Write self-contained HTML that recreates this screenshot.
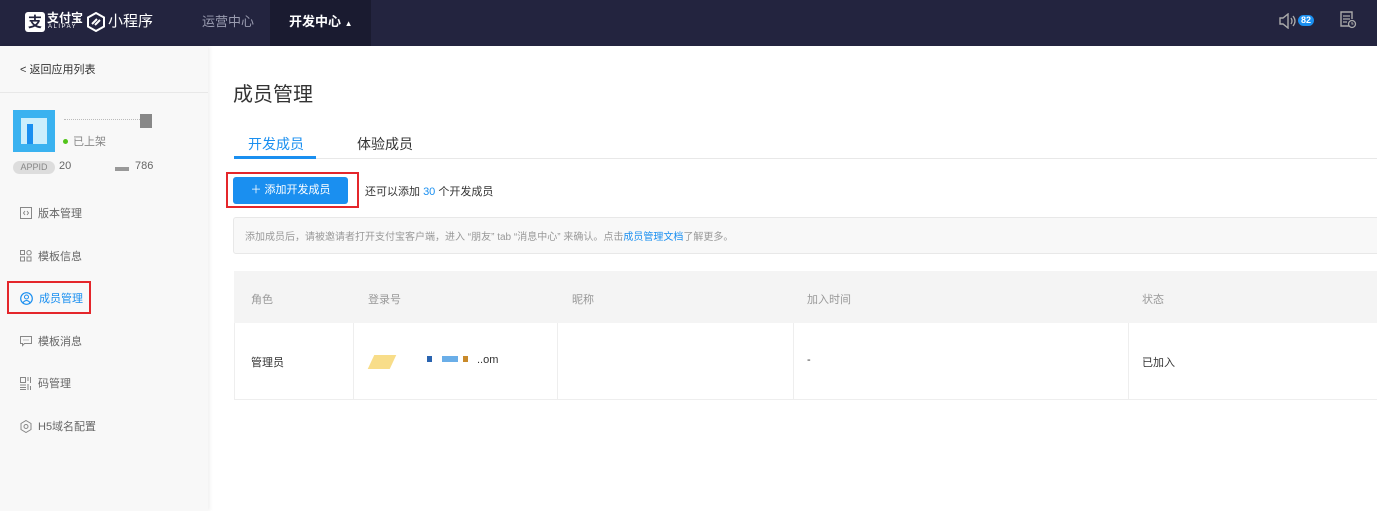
<!DOCTYPE html>
<html><head><meta charset="utf-8">
<style>
*{margin:0;padding:0;box-sizing:border-box}
body{width:1377px;height:511px;overflow:hidden;font-family:"Liberation Sans","Noto Sans CJK SC",sans-serif;background:#fff;position:relative;font-size:12px;color:#333}
.hdr{position:absolute;left:0;top:0;width:1377px;height:46px;background:#23243f}
.hdr .t{position:absolute;top:11px;font-size:13px;color:#9a9cb0}
.act{position:absolute;left:270px;top:0;width:101px;height:46px;background:#1a1b30}
.side{position:absolute;left:0;top:46px;width:208px;height:465px;background:#f8f8f8;box-shadow:2px 0 4px rgba(0,0,0,.06)}
.side .it{position:absolute;left:20px;font-size:11px;color:#666;display:flex;align-items:center}
.side .it svg{margin-right:6px}
.abs{position:absolute}
.tbl{position:absolute;left:234px;top:271px;width:1143px;height:129px;border-bottom:1px solid #eee}
.th{position:absolute;top:0;height:52px;width:100%;background:#f4f4f4}
.cell{position:absolute;font-size:11px}
.vl{position:absolute;top:52px;width:1px;height:77px;background:#eee}
</style></head><body>
<div class="hdr">
 <div class="abs" style="left:25px;top:12px;width:20px;height:20px;background:#fff;border-radius:3px;color:#23243f;font-size:14px;font-weight:bold;text-align:center;line-height:20px">支</div>
 <div class="abs" style="left:47px;top:9px;color:#fff;font-size:12px;font-weight:bold">支付宝</div>
 <div class="abs" style="left:48px;top:24px;color:#fff;font-size:6px;letter-spacing:1.5px">ALIPAY</div>
 <svg class="abs" style="left:87px;top:12px" width="18" height="20" viewBox="0 0 18 20"><path d="M9 1 L17 5.5 L17 14.5 L9 19 L1 14.5 L1 5.5 Z" fill="none" stroke="#fff" stroke-width="2"/><path d="M5 12 L10 7 M8 13 L13 8" stroke="#fff" stroke-width="2"/></svg>
 <div class="abs" style="left:108px;top:10px;color:#fff;font-size:15px">小程序</div>
 <div class="t" style="left:202px">运营中心</div>
 <div class="act"></div>
 <div class="t" style="left:289px;color:#fff;font-weight:bold">开发中心 <span style="font-size:8px">▲</span></div>
 <svg class="abs" style="left:1279px;top:13px" width="18" height="16" viewBox="0 0 18 16"><path d="M1 5h3l5-4v14l-5-4H1z" fill="none" stroke="#aaa" stroke-width="1.4"/><path d="M12 5q2 3 0 6M14 3q4 5 0 10" fill="none" stroke="#aaa" stroke-width="1.3"/></svg>
 <div class="abs" style="left:1298px;top:15px;width:16px;height:11px;border-radius:6px;background:#1a8ff0;color:#fff;font-size:9px;font-weight:bold;text-align:center;line-height:11px">82</div>
 <svg class="abs" style="left:1339px;top:11px" width="18" height="18" viewBox="0 0 18 18"><path d="M10 15H2V1h11v7" fill="none" stroke="#aaa" stroke-width="1.4"/><path d="M4 5h7M4 8h7M4 11h4" stroke="#aaa" stroke-width="1.3"/><circle cx="13" cy="13" r="3.5" fill="none" stroke="#aaa" stroke-width="1.3"/><path d="M13 11v2h1.5" stroke="#aaa" stroke-width="1"/></svg>
</div>

<div class="side">
 <div class="abs" style="left:20px;top:15px;font-size:11px;color:#333">&lt; 返回应用列表</div>
 <div class="abs" style="left:0;top:46px;width:208px;height:1px;background:#e8e8e8"></div>
 <div class="abs" style="left:13px;top:64px;width:42px;height:42px;background:#3ab2f0"><div style="position:absolute;left:8px;top:8px;width:26px;height:26px;background:#cbeefc"></div><div style="position:absolute;left:14px;top:14px;width:6px;height:20px;background:#1a8ff0"></div></div>
 <div class="abs" style="left:64px;top:73px;width:80px;height:2px;border-top:1px dotted #bbb"></div>
 <div class="abs" style="left:140px;top:68px;width:12px;height:14px;background:#888"></div>
 <div class="abs" style="left:63px;top:93px;width:5px;height:5px;border-radius:50%;background:#52c41a"></div>
 <div class="abs" style="left:73px;top:87px;font-size:11px;color:#888">已上架</div>
 <div class="abs" style="left:13px;top:115px;width:42px;height:13px;border-radius:7px;background:#ddd;color:#888;font-size:9px;text-align:center;line-height:13px">APPID</div>
 <div class="abs" style="left:59px;top:114px;font-size:11px;color:#666">20</div>
 <div class="abs" style="left:115px;top:121px;width:14px;height:4px;background:#999"></div>
 <div class="abs" style="left:135px;top:114px;font-size:11px;color:#666">786</div>
 <div class="it" style="top:159px"><svg width="12" height="12"><rect x=".5" y=".5" width="11" height="11" fill="none" stroke="#888"/><path d="M5 4L3.5 6 5 8M7 4l1.5 2L7 8" fill="none" stroke="#888"/></svg>版本管理</div>
 <div class="it" style="top:202px"><svg width="12" height="12"><rect x=".5" y=".5" width="4" height="4" fill="none" stroke="#888"/><rect x=".5" y="7" width="4" height="4" fill="none" stroke="#888"/><rect x="7" y="7" width="4" height="4" fill="none" stroke="#888"/><circle cx="9" cy="2.7" r="2.2" fill="none" stroke="#888"/></svg>模板信息</div>
 <div class="abs" style="left:7px;top:235px;width:84px;height:33px;border:2px solid #e4262b"></div>
 <div class="it" style="top:244px;color:#1a8ff0"><svg width="13" height="13"><circle cx="6.5" cy="6.5" r="5.8" fill="none" stroke="#1a8ff0" stroke-width="1.2"/><circle cx="6.5" cy="5" r="2" fill="none" stroke="#1a8ff0"/><path d="M3 10.5q3.5-4 7 0" fill="none" stroke="#1a8ff0"/></svg>成员管理</div>
 <div class="it" style="top:287px"><svg width="12" height="12"><path d="M.5 1.5h11v7h-7l-2 2v-2h-2z" fill="none" stroke="#888"/><path d="M3.5 5h1M5.5 5h1M7.5 5h1" stroke="#888"/></svg>模板消息</div>
 <div class="it" style="top:329px"><svg width="12" height="13"><rect x=".5" y=".5" width="5" height="5" fill="none" stroke="#888"/><path d="M0 8h6M0 10.5h6M0 12.5h6M8 0v4M10.5 0v6M8 7v6M10.5 9v4" stroke="#888"/></svg>码管理</div>
 <div class="it" style="top:372px"><svg width="12" height="13"><path d="M6 .5l5 3v6l-5 3-5-3v-6z" fill="none" stroke="#888"/><circle cx="6" cy="6.5" r="2" fill="none" stroke="#888"/></svg>H5域名配置</div>
</div>

<div class="abs" style="left:233px;top:78px;font-size:20px;color:#333">成员管理</div>
<div class="abs" style="left:234px;top:158px;width:1143px;height:1px;background:#e8e8e8"></div>
<div class="abs" style="left:248px;top:134px;font-size:14px;color:#1a8ff0">开发成员</div>
<div class="abs" style="left:234px;top:156px;width:82px;height:3px;background:#1a8ff0"></div>
<div class="abs" style="left:357px;top:134px;font-size:14px;color:#333">体验成员</div>

<div class="abs" style="left:226px;top:172px;width:133px;height:36px;border:2px solid #e4262b"></div>
<div class="abs" style="left:233px;top:177px;width:115px;height:27px;background:#1a8ff0;border-radius:3px;color:#fff;font-size:11px;text-align:center;line-height:27px">＋ 添加开发成员</div>
<div class="abs" style="left:365px;top:183px;font-size:11px;color:#333">还可以添加 <span style="color:#1a8ff0">30</span> 个开发成员</div>

<div class="abs" style="left:233px;top:217px;width:1150px;height:37px;background:#f8f8f8;border:1px solid #e8e8e8;border-radius:3px"></div>
<div class="abs" style="left:245px;top:228px;font-size:10px;color:#999">添加成员后，请被邀请者打开支付宝客户端，进入 “朋友” tab “消息中心” 来确认。点击<span style="color:#1a8ff0">成员管理文档</span>了解更多。</div>

<div class="tbl">
 <div class="th"></div>
 <div class="cell" style="left:17px;top:20px;color:#999">角色</div>
 <div class="cell" style="left:134px;top:20px;color:#999">登录号</div>
 <div class="cell" style="left:338px;top:20px;color:#999">昵称</div>
 <div class="cell" style="left:573px;top:20px;color:#999">加入时间</div>
 <div class="cell" style="left:908px;top:20px;color:#999">状态</div>
 <div class="vl" style="left:0"></div>
 <div class="vl" style="left:119px"></div>
 <div class="vl" style="left:323px"></div>
 <div class="vl" style="left:559px"></div>
 <div class="vl" style="left:894px"></div>
 <div class="cell" style="left:17px;top:83px;color:#333">管理员</div>
 <div class="abs" style="left:137px;top:84px;width:22px;height:14px;background:#f6d46b;transform:skewX(-25deg);opacity:.8"></div>
 <div class="abs" style="left:193px;top:85px;width:5px;height:6px;background:#2a64b0"></div>
 <div class="abs" style="left:208px;top:85px;width:16px;height:6px;background:#6aaee8"></div>
 <div class="abs" style="left:229px;top:85px;width:5px;height:6px;background:#c98a2a"></div>
 <div class="cell" style="left:243px;top:83px;color:#333">..om</div>
 <div class="cell" style="left:573px;top:83px;color:#333">-</div>
 <div class="cell" style="left:908px;top:83px;color:#333">已加入</div>
</div>
</body></html>
